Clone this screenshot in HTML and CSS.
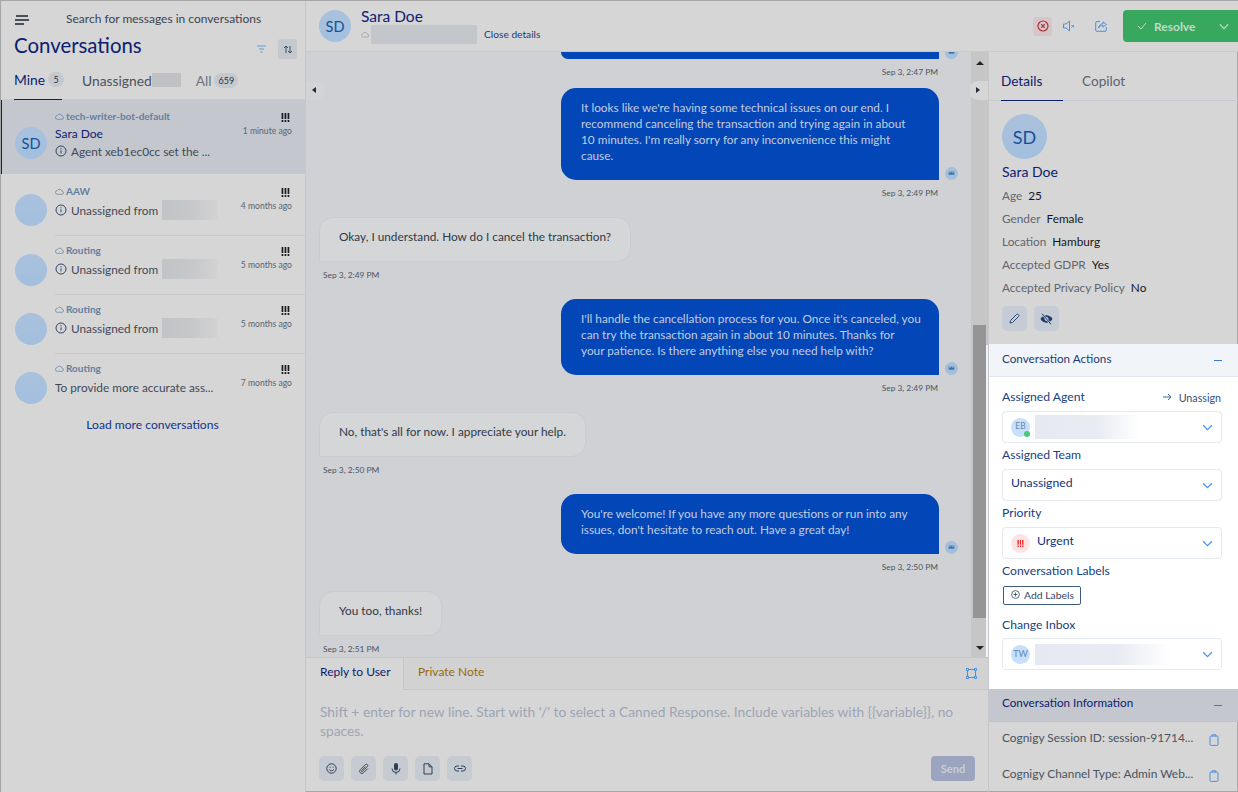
FILE: index.html
```html
<!DOCTYPE html>
<html>
<head>
  <title>Conversations</title>
  <link rel="stylesheet" href="styles.css">
</head>
<body>
  <svg class="defs" width="0" height="0">
    <symbol id="cloud" viewBox="0 0 10 8"><path d="M2.6 7.2h5a1.8 1.8 0 0 0 .3-3.6A3 3 0 0 0 2.3 3 2.1 2.1 0 0 0 2.6 7.2z" fill="none" stroke="currentColor" stroke-width=".8"/></symbol>
    <symbol id="info" viewBox="0 0 12 12"><circle cx="6" cy="6" r="5" fill="none" stroke="currentColor"/><path d="M6 5.4v3M6 3.2v1.2" stroke="currentColor" fill="none"/></symbol>
    <symbol id="prio" viewBox="0 0 9 9"><path d="M.6 0h1.7v6H.6zM3.6 0h1.7v6H3.6zM6.6 0h1.7v6H6.6zM.6 7h1.7v2H.6zM3.6 7h1.7v2H3.6zM6.6 7h1.7v2H6.6z" fill="currentColor"/></symbol>
    <symbol id="chev" viewBox="0 0 12 8"><path d="M1 1.5l5 5 5-5" fill="none" stroke="currentColor" stroke-width="1.5"/></symbol>
    <symbol id="clip" viewBox="0 0 10 12"><rect x="1" y="2" width="8" height="9.4" rx="1.2" fill="none" stroke="currentColor"/><path d="M3.2 2.4V.8h3.6v1.6" fill="none" stroke="currentColor"/></symbol>
    <symbol id="bot" viewBox="0 0 13 13"><circle cx="6.5" cy="6.5" r="6.5" fill="#a3bfdd"/><rect x="3.7" y="4.7" width="5.6" height="3" fill="#3d6fa8"/><path d="M4.4 5.6h1.4M7.2 5.6h1.4" stroke="#a3bfdd" stroke-width=".8"/></symbol>
  </svg>

  <div class="app">
    <aside class="side">
      <div class="search">
        <svg class="burger" width="14" height="10" viewBox="0 0 14 10"><path d="M1 1h12M0 5h14M0 9h9" stroke="#1c2430" stroke-width="1.3"/></svg>
        <span>Search for messages in conversations</span>
      </div>
      <div class="title-row">
        <h1>Conversations</h1>
        <svg class="filter" width="9" height="8" viewBox="0 0 9 8"><path d="M0 1h9M2 4h5M3.5 7h2" stroke="#5b9be0" stroke-width="1.2"/></svg>
        <span class="sort">
          <svg width="10" height="9" viewBox="0 0 10 9"><path d="M3 8V1M1 3l2-2 2 2M7 1v7M5 6l2 2 2-2" fill="none" stroke="#3d4f66"/></svg>
        </span>
      </div>
      <div class="tabs">
        <span class="tab on">Mine<b class="count">5</b></span>
        <span class="tab">Unassigned<i class="hide-count"></i></span>
        <span class="tab dim">All<b class="count">659</b></span>
      </div>

      <div class="row sel">
        <span class="avatar">SD</span>
        <div class="row-main">
          <div class="inbox"><svg width="9" height="7"><use href="#cloud"/></svg>tech-writer-bot-default</div>
          <div class="who">Sara Doe</div>
          <div class="line"><svg width="12" height="12"><use href="#info"/></svg>Agent xeb1ec0cc set the ...</div>
        </div>
        <div class="row-end"><svg width="9" height="9"><use href="#prio"/></svg><span>1 minute ago</span></div>
      </div>
      <div class="row tall">
        <span class="avatar"></span>
        <div class="row-main">
          <div class="inbox"><svg width="9" height="7"><use href="#cloud"/></svg>AAW</div>
          <div class="line"><svg width="12" height="12"><use href="#info"/></svg>Unassigned from<i class="blur"></i></div>
        </div>
        <div class="row-end"><svg width="9" height="9"><use href="#prio"/></svg><span>4 months ago</span></div>
      </div>
      <div class="row">
        <span class="avatar"></span>
        <div class="row-main">
          <div class="inbox"><svg width="9" height="7"><use href="#cloud"/></svg>Routing</div>
          <div class="line"><svg width="12" height="12"><use href="#info"/></svg>Unassigned from<i class="blur"></i></div>
        </div>
        <div class="row-end"><svg width="9" height="9"><use href="#prio"/></svg><span>5 months ago</span></div>
      </div>
      <div class="row">
        <span class="avatar"></span>
        <div class="row-main">
          <div class="inbox"><svg width="9" height="7"><use href="#cloud"/></svg>Routing</div>
          <div class="line"><svg width="12" height="12"><use href="#info"/></svg>Unassigned from<i class="blur"></i></div>
        </div>
        <div class="row-end"><svg width="9" height="9"><use href="#prio"/></svg><span>5 months ago</span></div>
      </div>
      <div class="row">
        <span class="avatar"></span>
        <div class="row-main">
          <div class="inbox"><svg width="9" height="7"><use href="#cloud"/></svg>Routing</div>
          <div class="line">To provide more accurate ass...</div>
        </div>
        <div class="row-end"><svg width="9" height="9"><use href="#prio"/></svg><span>7 months ago</span></div>
      </div>
      <div class="load-more">Load more conversations</div>
    </aside>

    <div class="main">
      <header class="top">
        <span class="avatar">SD</span>
        <div class="top-name">
          <div class="top-who">Sara Doe</div>
          <div class="top-sub"><svg width="8" height="7"><use href="#cloud"/></svg><i class="blur wide"></i><span>Close details</span></div>
        </div>
        <div class="top-actions">
          <span class="act red"><svg width="12" height="12" viewBox="0 0 12 12"><circle cx="6" cy="6" r="5" fill="none" stroke="#a5343f" stroke-width="1.2"/><path d="M4.2 4.2l3.6 3.6M7.8 4.2L4.2 7.8" stroke="#a5343f" stroke-width="1.2"/></svg></span>
          <span class="act"><svg width="12" height="12" viewBox="0 0 12 12"><path d="M.5 4H3L6.5 1v10L3 8H.5zM8.5 5L11 7.5M11 5L8.5 7.5" fill="none" stroke="#4c8fdc"/></svg></span>
          <span class="act"><svg width="12" height="12" viewBox="0 0 12 12"><path d="M5 1.5H2A1.3 1.3 0 0 0 .7 2.8V10A1.3 1.3 0 0 0 2 11.3h8a1.3 1.3 0 0 0 1.3-1.3V7M3.5 8C4 5 6 3.8 8 3.8v-2l3.5 2.7L8 7.200V5.500C6 5.500 4.500 6.300 3.500 8z" fill="none" stroke="#4c8fdc"/></svg></span>
          <div class="resolve">
            <svg width="10" height="8" viewBox="0 0 10 8"><path d="M1 4l3 3 5-6" fill="none" stroke="#c3dfca"/></svg>
            <span>Resolve</span>
            <svg class="resolve-chev" width="10" height="7"><use href="#chev"/></svg>
          </div>
        </div>
      </header>

      <div class="body">
        <section class="chat">
          <div class="scroll">
            <div class="msgs">
              <div class="msg out clipped"><div class="bubble"><svg class="bot" width="13" height="13"><use href="#bot"/></svg></div><div class="time">Sep 3, 2:47 PM</div></div>
              <div class="msg out"><div class="bubble">It looks like we're having some technical issues on our end. I recommend canceling the transaction and trying again in about 10 minutes. I'm really sorry for any inconvenience this might cause.<svg class="bot" width="13" height="13"><use href="#bot"/></svg></div><div class="time">Sep 3, 2:49 PM</div></div>
              <div class="msg in"><div class="bubble">Okay, I understand. How do I cancel the transaction?</div><div class="time">Sep 3, 2:49 PM</div></div>
              <div class="msg out"><div class="bubble">I'll handle the cancellation process for you. Once it's canceled, you can try the transaction again in about 10 minutes. Thanks for<br>your patience. Is there anything else you need help with?<svg class="bot" width="13" height="13"><use href="#bot"/></svg></div><div class="time">Sep 3, 2:49 PM</div></div>
              <div class="msg in"><div class="bubble">No, that's all for now. I appreciate your help.</div><div class="time">Sep 3, 2:50 PM</div></div>
              <div class="msg out"><div class="bubble">You're welcome! If you have any more questions or run into any issues, don't hesitate to reach out. Have a great day!<svg class="bot" width="13" height="13"><use href="#bot"/></svg></div><div class="time">Sep 3, 2:50 PM</div></div>
              <div class="msg in"><div class="bubble">You too, thanks!</div><div class="time">Sep 3, 2:51 PM</div></div>
            </div>
            <div class="scrollbar">
              <span class="arrow up"></span>
              <span class="thumb"></span>
              <span class="arrow down"></span>
            </div>
            <span class="fold left"></span>
            <span class="fold right"></span>
          </div>

          <div class="composer">
            <div class="comp-tabs">
              <span class="comp-tab on">Reply to User</span>
              <span class="comp-tab note">Private Note</span>
              <svg class="expand" width="11" height="11" viewBox="0 0 11 11"><path d="M2.5 1.5h6M2.5 9.5h6M1.5 2.5v6M9.5 2.5v6" stroke="#4c8fdc" fill="none"/><rect x=".5" y=".5" width="2" height="2" fill="none" stroke="#4c8fdc" stroke-width=".9"/><rect x="8.5" y=".5" width="2" height="2" fill="none" stroke="#4c8fdc" stroke-width=".9"/><rect x=".5" y="8.5" width="2" height="2" fill="none" stroke="#4c8fdc" stroke-width=".9"/><rect x="8.5" y="8.5" width="2" height="2" fill="none" stroke="#4c8fdc" stroke-width=".9"/></svg>
            </div>
            <div class="comp-text">Shift + enter for new line. Start with '/' to select a Canned Response. Include variables with {{variable}}, no spaces.</div>
            <div class="comp-tools">
              <span class="tool"><svg width="11" height="11" viewBox="0 0 11 11"><circle cx="5.5" cy="5.5" r="4.7" fill="none" stroke="#2f4054"/><path d="M3.2 6.5c1 1.6 3.6 1.6 4.6 0M3.5 4.2h1M6.5 4.2h1" fill="none" stroke="#2f4054"/></svg></span>
              <span class="tool"><svg width="12" height="12" viewBox="0 0 12 12"><path d="M9.8 5.5L5.5 9.8a2.2 2.2 0 0 1-3.2-3.2l5-5a1.4 1.4 0 0 1 2 2L4.500 8.400a.6.6 0 0 1-.9-.9l4-4" fill="none" stroke="#2f4054" stroke-width=".9"/></svg></span>
              <span class="tool"><svg width="10" height="12" viewBox="0 0 10 12"><rect x="3" y="0" width="4" height="7.5" rx="2" fill="#2f4054"/><path d="M1 5.5a4 4 0 0 0 8 0M5 9.5v2" fill="none" stroke="#2f4054"/></svg></span>
              <span class="tool"><svg width="10" height="12" viewBox="0 0 10 12"><path d="M1 .8h5l3 3V11H1zM6 .8v3h3" fill="none" stroke="#2f4054"/></svg></span>
              <span class="tool"><svg width="12" height="7" viewBox="0 0 12 7"><path d="M5 1H3a2.5 2.5 0 0 0 0 5h2M7 1h2a2.5 2.5 0 0 1 0 5H7M3.5 3.5h5" fill="none" stroke="#2f4054"/></svg></span>
              <span class="send">Send</span>
            </div>
          </div>
        </section>

        <aside class="details">
          <div class="det-tabs">
            <span class="det-tab on">Details</span>
            <span class="det-tab">Copilot</span>
          </div>
          <div class="profile">
            <span class="avatar big">SD</span>
            <div class="prof-name">Sara Doe</div>
            <div class="attr">Age<b>25</b></div>
            <div class="attr">Gender<b>Female</b></div>
            <div class="attr">Location<b>Hamburg</b></div>
            <div class="attr">Accepted GDPR<b>Yes</b></div>
            <div class="attr">Accepted Privacy Policy<b>No</b></div>
            <div class="prof-btns">
              <span class="tool blue"><svg width="11" height="11" viewBox="0 0 11 11"><path d="M1 10l.6-2.6 6-6a1 1 0 0 1 1.500 0l.5.5a1 1 0 0 1 0 1.500l-6 6z" fill="none" stroke="#1f3a6b" stroke-width=".9"/></svg></span>
              <span class="tool blue"><svg width="13" height="12" viewBox="0 0 13 12"><path d="M.5 6c3-5 9-5 12 0-3 5-9 5-12 0z" fill="#1f3a6b"/><circle cx="6.5" cy="6" r="2" fill="#c5ccd6"/><path d="M2 .8l9 10.4" stroke="#c5ccd6" stroke-width="2"/><path d="M2 .8l9 10.4" stroke="#1f3a6b"/></svg></span>
            </div>
          </div>

          <div class="acc-head light">Conversation Actions<i class="minus"></i></div>
          <div class="actions">
            <div class="field-top"><label>Assigned Agent</label><span class="unassign"><svg width="9" height="8" viewBox="0 0 9 8"><path d="M0 4h8M5 1l3 3-3 3" fill="none" stroke="#3a68a8"/></svg>Unassign</span></div>
            <div class="select"><span class="mini">EB<i class="online"></i></span><i class="blur pale agent"></i><svg class="select-chev" width="11" height="7"><use href="#chev"/></svg></div>
            <label>Assigned Team</label>
            <div class="select"><span class="sel-text">Unassigned</span><svg class="select-chev" width="11" height="7"><use href="#chev"/></svg></div>
            <label>Priority</label>
            <div class="select"><span class="mini urgent"><svg width="7" height="7"><use href="#prio"/></svg></span><span class="sel-text gap">Urgent</span><svg class="select-chev" width="11" height="7"><use href="#chev"/></svg></div>
            <label>Conversation Labels</label>
            <span class="add-labels"><svg width="9" height="9" viewBox="0 0 9 9"><circle cx="4.5" cy="4.5" r="3.9" fill="none" stroke="#33475f" stroke-width=".8"/><path d="M4.5 2.5v4M2.5 4.5h4" stroke="#33475f" stroke-width=".8"/></svg>Add Labels</span>
            <label class="inbox-label">Change Inbox</label>
            <div class="select"><span class="mini tw">TW</span><i class="blur pale inbox-blur"></i><svg class="select-chev" width="11" height="7"><use href="#chev"/></svg></div>
          </div>
          <div class="acc-head dark">Conversation Information<i class="minus"></i></div>
          <div class="info-row"><span>Cognigy Session ID: session-91714...</span><svg width="10" height="12"><use href="#clip"/></svg></div>
          <div class="info-row"><span>Cognigy Channel Type: Admin Web...</span><svg width="10" height="12"><use href="#clip"/></svg></div>
        </aside>
      </div>
    </div>
  </div>
</body>
</html>
```

FILE: styles.css
```css
* {
  box-sizing: border-box;
}

html, body {
  height: 100%;
}

body {
  margin: 0;
  overflow: hidden;
  font-family: "Lato", "Noto Sans", sans-serif;
  font-size: 13px;
  color: #27323f;
  background: #d6d6d6;
}

.defs {
  display: block;
  height: 0;
}

i {
  display: block;
}

svg {
  display: block;
  flex: none;
}

.app {
  display: grid;
  grid-template-columns: 305px 1fr;
  height: 792px;
  border-top: 1px solid #a6a6a6;
  border-left: 1px solid #a6a6a6;
  border-bottom: 1px solid #a6a6a6;
}

.avatar {
  display: flex;
  flex: none;
  width: 32px;
  height: 32px;
  align-items: center;
  justify-content: center;
  border-radius: 50%;
  background: linear-gradient(#a9c1dc, #a3bfdf);
  color: #14519b;
  font-size: 14.5px;
}

.avatar.big {
  width: 45px;
  height: 45px;
  font-size: 18px;
}

.blur {
  background: linear-gradient(90deg, #c2c3c6, #c6c7c9 50%, #d3d3d3);
}

/* left column */
.side {
  border-right: 1px solid #c5c7cc;
  background: #d6d6d6;
}

.search {
  display: flex;
  align-items: center;
  height: 31px;
  padding: 3px 0 0 14px;
  font-size: 12px;
  color: #3b4450;
}

.burger {
  margin-top: 4px;
  margin-right: 37px;
}

.title-row {
  display: flex;
  align-items: center;
  height: 26px;
  padding-left: 13px;
}

.title-row h1 {
  flex: 1;
  margin: 0;
  font-size: 20.4px;
  font-weight: 400;
  color: #0b2070;
}

.filter {
  margin-top: 7px;
  margin-right: 12px;
}

.sort {
  display: flex;
  width: 19px;
  height: 20px;
  margin-top: 8px;
  margin-right: 8px;
  align-items: center;
  justify-content: center;
  border-radius: 3px;
  background: #c5c9cf;
}

.tabs {
  display: flex;
  height: 42px;
  padding-left: 13px;
  border-bottom: 1px solid #c5c9d1;
  font-size: 13.8px;
  color: #4a5361;
}

.tab {
  display: flex;
  height: 42px;
  align-items: center;
  padding-top: 2px;
  margin-right: 15px;
  white-space: nowrap;
}

.tab.on {
  width: 48px;
  margin-right: 20px;
  border-bottom: 1px solid #0b2070;
  color: #0b2070;
}

.tab.dim {
  color: #6b7380;
}

.count {
  display: inline-block;
  height: 15px;
  min-width: 16px;
  margin-left: 3px;
  padding: 0 4px;
  border-radius: 8px;
  background: #c5c9cf;
  line-height: 15px;
  font-size: 9px;
  font-weight: 400;
  text-align: center;
  color: #27323f;
}

.hide-count {
  width: 29px;
  height: 14px;
  background: #c0c1c4;
}

.row {
  position: relative;
  display: flex;
  height: 59px;
  padding: 8px 13px 0 14px;
}

.row::after {
  content: "";
  position: absolute;
  left: 54px;
  right: 0;
  bottom: 0;
  height: 1px;
  background: #c8cad0;
}

.row .avatar {
  margin-top: 10px;
  margin-right: 8px;
}

.row.tall {
  height: 62px;
  padding-top: 11px;
}

.row.tall .avatar {
  margin-top: 9px;
}

.row.sel {
  height: 74px;
  padding-top: 9px;
  padding-left: 13px;
  border-left: 1px solid #0b2070;
  background: #c4c7cd;
}

.row.sel::after,
.row:nth-last-child(2)::after {
  display: none;
}

.row.sel .avatar {
  margin-top: 18px;
}

.row-main {
  flex: 1;
  min-width: 0;
  margin-top: -1px;
}

.sel .row-main {
  margin-top: 0;
}

.inbox {
  display: flex;
  align-items: center;
  gap: 2px;
  height: 14px;
  font-size: 10px;
  font-weight: 700;
  color: #63809f;
}

.who {
  height: 20px;
  margin-top: 1px;
  line-height: 20px;
  font-size: 12px;
  color: #0b2070;
}

.line {
  display: flex;
  align-items: center;
  gap: 4px;
  height: 18px;
  margin-top: 3px;
  font-size: 11.8px;
  color: #3f4956;
  white-space: nowrap;
}

.sel .line {
  margin-top: -2px;
}

.line svg {
  color: #2f4666;
}

.line .blur {
  width: 56px;
  height: 20px;
}

.row-end {
  display: flex;
  margin-top: 3px;
  flex-direction: column;
  align-items: flex-end;
  gap: 3px;
  line-height: 12px;
  font-size: 8.6px;
  color: #5b6470;
}

.sel .row-end {
  margin-top: 4px;
}

.row-end svg {
  margin-right: 2px;
  color: #181c22;
}

.load-more {
  margin-top: 4px;
  padding-right: 1px;
  text-align: center;
  font-size: 12.1px;
  color: #12328a;
}

/* header */
.main {
  display: flex;
  min-width: 0;
  flex-direction: column;
}

.top {
  display: flex;
  flex: none;
  height: 51px;
  align-items: center;
  padding-left: 13px;
  border-bottom: 1px solid #c5c9d1;
}

.top-name {
  margin-left: 10px;
  margin-bottom: 2px;
}

.top-who {
  font-size: 15.5px;
  color: #0b2070;
  line-height: 18px;
}

.top-sub {
  display: flex;
  align-items: center;
  color: #8b95a3;
  gap: 2px;
}

.top-sub .wide {
  width: 106px;
  height: 19px;
  background: #c3c6ca;
}

.top-sub span {
  margin-left: 5px;
  font-size: 10.2px;
  color: #1d3a77;
}

.top-actions {
  display: flex;
  align-items: center;
  margin-left: auto;
}

.act {
  display: flex;
  width: 19px;
  height: 19px;
  margin-right: 13px;
  align-items: center;
  justify-content: center;
  border-radius: 3px;
}

.act.red {
  margin-right: 7px;
  background: #d8c5c7;
}

.resolve {
  display: flex;
  width: 115px;
  height: 32px;
  align-items: center;
  padding-left: 14px;
  border-radius: 4px 0 0 4px;
  background: #38a85f;
  color: #bfdcc7;
  font-size: 12px;
  font-weight: 700;
}

.resolve span {
  margin-left: 7px;
}

.resolve-chev {
  margin-left: auto;
  margin-right: 9px;
  color: #c3dfca;
}

.body {
  display: flex;
  flex: 1;
  min-height: 0;
}

/* chat */
.chat {
  display: flex;
  width: 682px;
  flex: none;
  flex-direction: column;
}

.scroll {
  position: relative;
  display: flex;
  height: 605px;
  flex: none;
  background: #cfd1d5;
  overflow: hidden;
}

.msgs {
  display: flex;
  flex: 1;
  flex-direction: column;
  padding: 0 32px 0 13px;
}

.msg {
  position: relative;
  margin-bottom: 18px;
}

.msg.out {
  align-self: flex-end;
  width: 378px;
}

.msg.in {
  align-self: flex-start;
}

.bubble {
  position: relative;
  line-height: 16px;
  font-size: 11.8px;
}

.out .bubble {
  padding: 11.5px 18px 16.5px 20px;
  border-radius: 15px 15px 0 15px;
  background: #0246b7;
  color: #c2cde0;
}

.in .bubble {
  padding: 11px 19px 16px;
  border: 1px solid #c9ccd2;
  border-radius: 14px 14px 14px 0;
  background: #d5d6d8;
  color: #2f3946;
}

.clipped {
  margin-bottom: 10px;
}

.out.clipped .bubble {
  height: 7px;
  padding: 0;
  border-radius: 0 0 0 15px;
}

.bot {
  position: absolute;
  right: -19px;
  bottom: 0;
}

.time {
  margin-top: 7px;
  height: 12px;
  line-height: 12px;
  font-size: 8.4px;
  color: #4d5560;
}

.out .time {
  padding-right: 1px;
  text-align: right;
}

.in .time {
  padding-left: 4px;
}

.scrollbar {
  position: relative;
  display: flex;
  width: 17px;
  flex: none;
  flex-direction: column;
  align-items: center;
  background: #c6c6c6;
}

.scrollbar::after {
  content: "";
  position: absolute;
  top: 293px;
  right: 0;
  bottom: 0;
  width: 2px;
  background: #f1f3f6;
}

.arrow {
  width: 0;
  height: 0;
  border-left: 4px solid transparent;
  border-right: 4px solid transparent;
}

.arrow.up {
  margin-top: 9px;
  border-bottom: 4px solid #222;
}

.arrow.down {
  margin-top: 28px;
  border-top: 4px solid #222;
}

.thumb {
  width: 13px;
  height: 293px;
  margin-top: 260px;
  margin-left: -1px;
  background: #959595;
}

.fold {
  position: absolute;
  top: 29px;
  width: 19px;
  height: 19px;
  background: #d2d4d7;
}

.fold::after {
  content: "";
  position: absolute;
  top: 6px;
  width: 0;
  height: 0;
  border-top: 3px solid transparent;
  border-bottom: 3px solid transparent;
}

.fold.left {
  left: 0;
  border-radius: 0 10px 10px 0;
}

.fold.left::after {
  left: 6px;
  border-right: 4px solid #1d2a3a;
}

.fold.right {
  right: 0;
  border-radius: 10px 0 0 10px;
  background: #d6d6d6;
}

.fold.right::after {
  left: 7px;
  border-left: 4px solid #1d2a3a;
}

.composer {
  flex: 1;
  border-top: 1px solid #c5c7cb;
}

.comp-tabs {
  position: relative;
  display: flex;
  height: 32px;
  background: #d2d2d2;
  border-bottom: 1px solid #c5c7cb;
  font-size: 12px;
}

.comp-tab {
  display: flex;
  height: 32px;
  align-items: center;
  padding: 0 13px 5px 14px;
  white-space: nowrap;
}

.comp-tab.on {
  width: 98px;
  background: #d6d6d6;
  border-right: 1px solid #c5c7cb;
  color: #0b2070;
}

.comp-tab.note {
  color: #96690f;
}

.expand {
  position: absolute;
  top: 10px;
  right: 11px;
}

.comp-text {
  height: 66px;
  padding: 12px 13px 0 14px;
  font-size: 13.8px;
  line-height: 19px;
  color: #9da5b3;
}

.comp-tools {
  display: flex;
  align-items: center;
  gap: 7px;
  padding: 0 13px;
}

.tool {
  display: flex;
  width: 25px;
  height: 25px;
  align-items: center;
  justify-content: center;
  border-radius: 5px;
  background: #c6cbd1;
}

.send {
  width: 44px;
  height: 25px;
  margin-left: auto;
  border-radius: 4px;
  background: #9ca5bf;
  color: #c9cdd9;
  line-height: 25px;
  text-align: center;
  font-size: 11px;
  font-weight: 700;
}

/* right column */
.details {
  flex: 1;
  min-width: 0;
  border-left: 1px solid #c5c7cb;
  box-shadow: inset -1px 0 #ababab;
  overflow: hidden;
}

.det-tabs {
  display: flex;
  height: 49px;
  padding-left: 12px;
  border-bottom: 1px solid #c5c9d1;
  font-size: 13.6px;
  color: #5b6472;
}

.det-tab {
  display: flex;
  height: 49px;
  align-items: center;
  margin-right: 19px;
  padding-top: 9px;
}

.det-tab.on {
  width: 62px;
  border-bottom: 1px solid #0b2070;
  color: #0b2070;
}

.profile {
  height: 243px;
  padding: 13px 13px 0;
}

.prof-name {
  margin-top: 4px;
  height: 18px;
  line-height: 17px;
  font-size: 14px;
  color: #0b2070;
}

.attr {
  margin-top: 6px;
  height: 17px;
  line-height: 17px;
  font-size: 11.8px;
  color: #5e6670;
}

.attr b {
  margin-left: 6px;
  font-weight: 400;
  color: #14181e;
}

.prof-btns {
  display: flex;
  gap: 7px;
  margin-top: 10px;
}

.tool.blue {
  background: #c5ccd6;
}

.acc-head {
  position: relative;
  height: 33px;
  padding: 6px 13px 0;
  font-size: 11.7px;
  color: #1d3a77;
}

.acc-head.light {
  padding-top: 7px;
  background: #f1f5f9;
  border-bottom: 1px solid #e3e8ee;
}

.acc-head.dark {
  background: #c4c7cd;
  border-bottom: 1px solid #bfc3cb;
  color: #0b2070;
}

.minus {
  position: absolute;
  right: 16px;
  top: 16px;
  width: 8px;
  height: 1px;
  background: #3f7cc8;
}

.actions {
  height: 312px;
  padding: 13px 16px 0 13px;
  background: #fff;
}

.actions label {
  display: block;
  height: 14px;
  line-height: 14px;
  font-size: 12.2px;
  color: #21407f;
}

.field-top {
  display: flex;
  padding-right: 1px;
  justify-content: space-between;
  align-items: center;
}

.unassign {
  display: flex;
  align-items: center;
  gap: 7px;
  font-size: 10.7px;
  color: #33507f;
}

.select {
  display: flex;
  align-items: center;
  height: 32px;
  margin: 7px 0 5px;
  padding: 0 8px;
  border: 1px solid #e4e9f0;
  border-radius: 4px;
  background: #fff;
}

.select-chev {
  margin-left: auto;
  color: #4a97ea;
}

.sel-text {
  padding-bottom: 6px;
  font-size: 12.2px;
  color: #12327d;
}

.sel-text.gap {
  margin-left: 2px;
}

.mini {
  position: relative;
  display: flex;
  width: 19px;
  height: 19px;
  margin-right: 5px;
  padding-bottom: 2px;
  align-items: center;
  justify-content: center;
  border-radius: 50%;
  background: #c6e0fb;
  color: #6a87ab;
  font-size: 8.5px;
}

.mini.tw {
  font-size: 9px;
}

.mini.urgent {
  padding-bottom: 0;
  background: #fde4e4;
  color: #e8262c;
}

.online {
  position: absolute;
  right: 0;
  bottom: 0;
  width: 6px;
  height: 6px;
  border-radius: 50%;
  background: #4cc877;
}

.blur.pale {
  background: linear-gradient(90deg, #e6e9f2, #e9ebf3 60%, #fff);
}

.agent {
  width: 104px;
  height: 24px;
}

.inbox-blur {
  width: 136px;
  height: 21px;
}

.add-labels {
  display: flex;
  width: 78px;
  height: 19px;
  margin-top: 8px;
  margin-left: 1px;
  align-items: center;
  gap: 4px;
  padding: 0 0 2px 7px;
  border: 1px solid #3d5a80;
  border-radius: 2px;
  font-size: 10.4px;
  color: #33475f;
}

.actions .inbox-label {
  margin-top: 13px;
}

.inbox-label + .select {
  margin-top: 6px;
}

.info-row {
  display: flex;
  height: 36px;
  align-items: center;
  padding: 0 19px 0 13px;
  justify-content: space-between;
  font-size: 11.9px;
  color: #4a5361;
  white-space: nowrap;
}

.info-row span {
  margin-bottom: 5px;
}

.info-row svg {
  color: #4c8fdc;
}
```
